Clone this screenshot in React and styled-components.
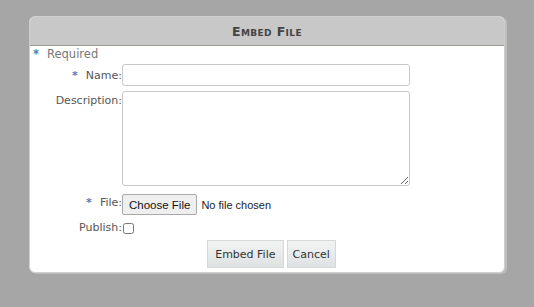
import React from "react";
import styled, { createGlobalStyle } from "styled-components";

const Global = createGlobalStyle`
  html, body { margin: 0; padding: 0; background: #a6a6a6; }
  body { font-family: "DejaVu Sans", Verdana, sans-serif; }
`;

const Page = styled.div`
  padding: 16px 0 0 29px;
  height: 307px;
  box-sizing: border-box;
`;

const Dialog = styled.div`
  width: 476px;
  height: 257px;
  box-sizing: border-box;
  background: #fff;
  border: 1px solid #cfcfcf;
  border-radius: 6px;
  box-shadow: 2px 1px 0 #bdbdbd;
  overflow: hidden;
  display: flex;
  flex-direction: column;
`;

const Header = styled.div`
  height: 28px;
  background: #c8c8c8;
  border-bottom: 1px solid #9a9b8e;
  display: flex;
  align-items: center;
  justify-content: center;
  font-size: 12.5px;
  font-weight: bold;
  font-variant: small-caps;
  letter-spacing: 0.4px;
  color: #444;
`;

const Body = styled.div`
  display: flex;
  flex-direction: column;
  font-size: 11px;
  color: #555;
`;

const Row = styled.div`
  display: flex;
  align-items: ${(p) => p.$align || "center"};
  margin-top: ${(p) => p.$mt || 0}px;
`;

const Star = styled.span`
  color: #4f7db3;
  font-weight: bold;
  margin-right: 8px;
`;

const RequiredNote = styled.div`
  display: flex;
  align-items: center;
  height: 16px;
  padding-left: 3px;
  font-size: 11.5px;
  color: #777;
`;

const Label = styled.label`
  width: 92px;
  flex: none;
  text-align: right;
  white-space: nowrap;
  padding-top: ${(p) => p.$pt || 0}px;
  color: #555;
`;

const TextInput = styled.input`
  width: 288px;
  height: 22px;
  box-sizing: border-box;
  border: 1px solid #c8c8c8;
  border-radius: 3px;
  margin: 0;
  padding: 2px 4px;
  font: inherit;
`;

const TextArea = styled.textarea`
  width: 288px;
  height: 95px;
  box-sizing: border-box;
  border: 1px solid #c8c8c8;
  border-radius: 3px;
  margin: 0;
  padding: 2px 4px;
  font: inherit;
  display: block;
`;

const FileInput = styled.input`
  margin: 0;
  font-family: "Liberation Sans", Arial, sans-serif;
  font-size: 11px;
  color: #222;
  align-self: flex-start;
  &::file-selector-button {
    font-family: "Liberation Sans", Arial, sans-serif;
    font-size: 11.5px;
    height: 21px;
    padding: 1px 6px;
    margin: 0 4px 0 0;
    border: 1px solid #a9a9a9;
    border-radius: 2px;
    background: #efefef;
    color: #111;
  }
`;

const Check = styled.input`
  margin: 2px 0 0 1px;
  width: 11px;
  height: 11px;
`;

const Actions = styled.div`
  display: flex;
  justify-content: center;
  gap: 3px;
  margin-top: 6px;
  padding-left: 9px;
`;

const Button = styled.button`
  height: 28px;
  padding: 0 ${(p) => p.$pad || 5}px;
  font-family: "DejaVu Sans", Verdana, sans-serif;
  font-size: 11px;
  color: #333;
  border: 1px solid #d6d8d8;
  background: linear-gradient(#f2f4f4, #dfe2e2);
  border-radius: 0;
  margin: 0;
`;

export default function App() {
  return (
    <>
      <Global />
      <Page>
        <Dialog>
          <Header>Embed File</Header>
          <Body>
            <RequiredNote>
              <Star>*</Star>Required
            </RequiredNote>
            <Row $mt={2}>
              <Label>
                <Star>*</Star>Name:
              </Label>
              <TextInput type="text" />
            </Row>
            <Row $mt={5} $align="flex-start">
              <Label $pt={3}>Description:</Label>
              <TextArea />
            </Row>
            <Row $mt={8} $align="flex-start">
              <Label $pt={2}>
                <Star>*</Star>File:
              </Label>
              <FileInput type="file" />
            </Row>
            <Row $mt={6}>
              <Label>Publish:</Label>
              <Check type="checkbox" />
            </Row>
            <Actions>
              <Button $pad={7}>Embed File</Button>
              <Button>Cancel</Button>
            </Actions>
          </Body>
        </Dialog>
      </Page>
    </>
  );
}
